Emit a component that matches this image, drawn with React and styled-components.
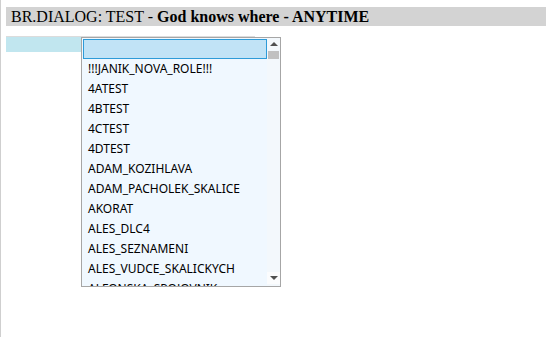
import React from "react";
import styled, { createGlobalStyle } from "styled-components";

const GlobalStyle = createGlobalStyle`
  html, body {
    margin: 0;
    padding: 0;
    background: #ffffff;
  }
`;

const Page = styled.div`
  min-height: 337px;
  box-sizing: border-box;
  border-left: 1px solid #cfcfcf;
  padding: 7px 1px 0 5px;
`;

const TitleBar = styled.div`
  background-color: #d3d3d3;
  height: 19px;
  line-height: 19px;
  padding-left: 5px;
  font-family: "Liberation Serif", "Times New Roman", serif;
  font-size: 16px;
  color: #000;
  white-space: nowrap;

  b {
    font-weight: bold;
  }
`;

const ComboWrap = styled.div`
  position: relative;
  margin-top: 10px;
  width: 249px;
`;

const ComboField = styled.div`
  height: 15px;
  background-color: #c1e6ef;
  border-top: 1px solid #dcdcdc;
`;

const Dropdown = styled.div`
  position: absolute;
  left: 75px;
  top: 1px;
  width: 200px;
  height: 250px;
  box-sizing: border-box;
  border: 1px solid #a6a6a6;
  background-color: #f0f8ff;
  display: flex;
  flex-direction: row;
  overflow: hidden;
`;

const ListColumn = styled.div`
  flex: 1;
  display: flex;
  flex-direction: column;
  padding: 1px 0 0 1px;
  overflow: hidden;
`;

const SearchInput = styled.div`
  height: 18px;
  flex-shrink: 0;
  border: 1px solid #2d9bd8;
  background-color: #c1e3f6;
`;

const Item = styled.div`
  height: 20px;
  line-height: 20px;
  flex-shrink: 0;
  padding-left: 5px;
  font-family: "Noto Sans", "Open Sans", sans-serif;
  font-size: 12px;
  color: #000;
  white-space: nowrap;
`;

const ScrollBar = styled.div`
  width: 13px;
  display: flex;
  flex-direction: column;
  background-color: #f3f8fc;
`;

const ArrowButton = styled.div`
  height: 12px;
  display: flex;
  align-items: center;
  justify-content: center;
  background-color: ${(p) => (p.$light ? "#fbfcfd" : "transparent")};
`;

const Arrow = styled.div`
  width: 0;
  height: 0;
  border-left: 4px solid transparent;
  border-right: 4px solid transparent;
  ${(p) =>
    p.$down
      ? "border-top: 4px solid #505050;"
      : "border-bottom: 4px solid #505050;"}
`;

const Thumb = styled.div`
  height: 8px;
  margin: 1px 1px 0 1px;
  background-color: #c1c1c1;
`;

const Track = styled.div`
  flex: 1;
`;

const BottomGap = styled.div`
  height: 2px;
`;

const roles = [
  "!!!JANIK_NOVA_ROLE!!!",
  "4ATEST",
  "4BTEST",
  "4CTEST",
  "4DTEST",
  "ADAM_KOZIHLAVA",
  "ADAM_PACHOLEK_SKALICE",
  "AKORAT",
  "ALES_DLC4",
  "ALES_SEZNAMENI",
  "ALES_VUDCE_SKALICKYCH",
  "ALFONSKA_SPOJOVNIK",
];

const App = () => {
  return (
    <>
      <GlobalStyle />
      <Page>
        <TitleBar>
          BR.DIALOG: TEST - <b>God knows where - ANYTIME</b>
        </TitleBar>

        <ComboWrap>
          <ComboField />
          <Dropdown>
            <ListColumn>
              <SearchInput />
              {roles.map((role, index) => (
                <Item key={index}>{role}</Item>
              ))}
            </ListColumn>
            <ScrollBar>
              <ArrowButton>
                <Arrow />
              </ArrowButton>
              <Thumb />
              <Track />
              <ArrowButton $light>
                <Arrow $down />
              </ArrowButton>
              <BottomGap />
            </ScrollBar>
          </Dropdown>
        </ComboWrap>
      </Page>
    </>
  );
};

export default App;
